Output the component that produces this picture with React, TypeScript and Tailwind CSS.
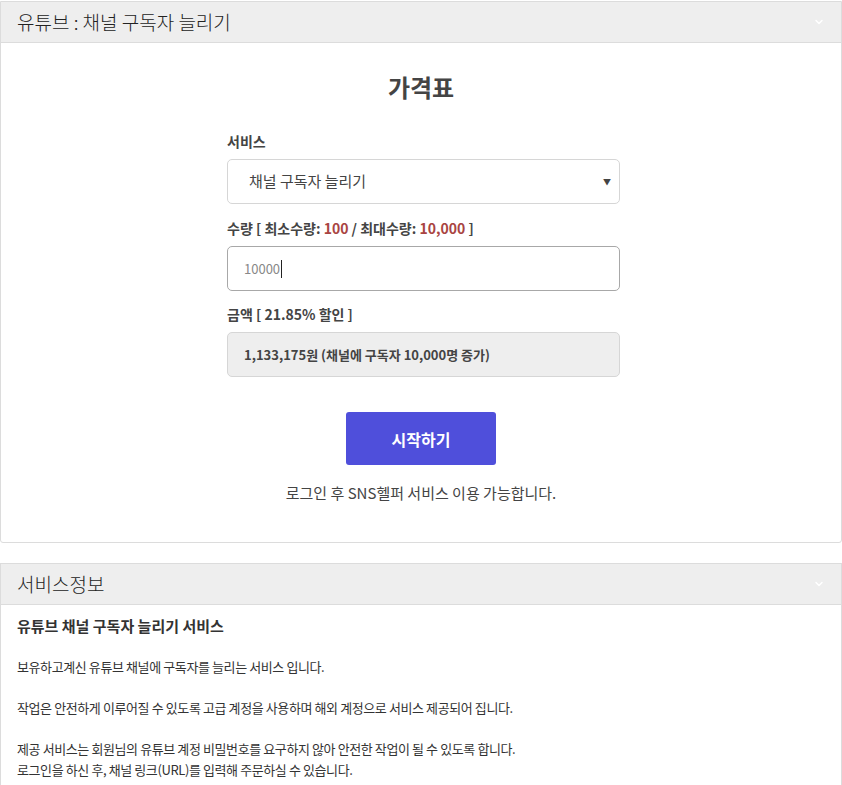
import { ChevronDown } from 'lucide-react';

const font = { fontFamily: '"Noto Sans CJK KR", "Noto Sans", sans-serif' };

const PanelHeader = ({ title }: { title: string }) => (
  <div className="flex h-[41px] items-center justify-between border-b border-[#dcdcdc] bg-[#eeeeee] px-[16px]">
    <span className="text-[19px] font-light text-[#222]">{title}</span>
    <ChevronDown className="h-3 w-3 text-white" strokeWidth={3} />
  </div>
);

export default function App() {
  return (
    <div className="min-h-screen bg-white text-[#333]" style={font}>
      <div className="rounded-b-[3px] border border-[#dcdcdc] mt-px">
        <PanelHeader title="유튜브 : 채널 구독자 늘리기" />
        <div className="flex flex-col items-center pt-[28px] pb-[39px]">
          <h1 className="text-[24px] font-bold leading-8 text-[#444]">가격표</h1>
          <div className="ml-[5px] mt-[28px] flex w-[393px] flex-col">
            <label className="mb-[8px] text-[14px] font-semibold leading-5 text-[#444]">서비스</label>
            <div className="flex h-[45px] items-center justify-between rounded-[5px] border border-[#d6d6d6] pl-[21px] pr-[8px]">
              <span className="text-[15px] text-[#444]">채널 구독자 늘리기</span>
              <span className="text-[8px] text-[#444]">▼</span>
            </div>
            <label className="mb-[8px] mt-[14px] text-[14px] font-semibold leading-5 text-[#444]">
              수량 [ 최소수량: <span className="text-[#a94442]">100</span> / 최대수량: <span className="text-[#a94442]">10,000</span> ]
            </label>
            <div className="flex h-[45px] items-center rounded-[5px] border border-[#a8a8a8] pl-[16px]">
              <span className="text-[13px] text-[#888]">10000</span>
              <span className="ml-px h-[18px] w-px bg-[#222]" />
            </div>
            <label className="mb-[8px] mt-[13px] text-[14px] font-semibold leading-5 text-[#444]">금액 [ 21.85% 할인 ]</label>
            <div className="flex h-[45px] items-center rounded-[5px] border border-[#d6d6d6] bg-[#eeeeee] pl-[16px]">
              <span className="text-[13px] font-semibold text-[#444]">1,133,175원 (채널에 구독자 10,000명 증가)</span>
            </div>
          </div>
          <button className="mt-[35px] h-[53px] w-[150px] rounded-[3px] bg-[#4f4fdb] text-[16px] font-bold text-white">시작하기</button>
          <p className="mt-[18px] text-[15px] leading-5 text-[#444]">로그인 후 SNS헬퍼 서비스 이용 가능합니다.</p>
        </div>
      </div>

      <div className="mt-[20px] border border-[#dcdcdc]">
        <PanelHeader title="서비스정보" />
        <div className="px-[16px] pt-[11px] pb-[20px] text-[13px] leading-[20.5px] tracking-[-0.4px] text-[#333]">
          <p className="text-[15px] font-semibold tracking-normal">유튜브 채널 구독자 늘리기 서비스</p>
          <br />
          <p>보유하고계신 유튜브 채널에 구독자를 늘리는 서비스 입니다.</p>
          <br />
          <p>작업은 안전하게 이루어질 수 있도록 고급 계정을 사용하며 해외 계정으로 서비스 제공되어 집니다.</p>
          <br />
          <p>
            제공 서비스는 회원님의 유튜브 계정 비밀번호를 요구하지 않아 안전한 작업이 될 수 있도록 합니다.
            <br />
            로그인을 하신 후, 채널 링크(URL)를 입력해 주문하실 수 있습니다.
          </p>
        </div>
      </div>
    </div>
  );
}
